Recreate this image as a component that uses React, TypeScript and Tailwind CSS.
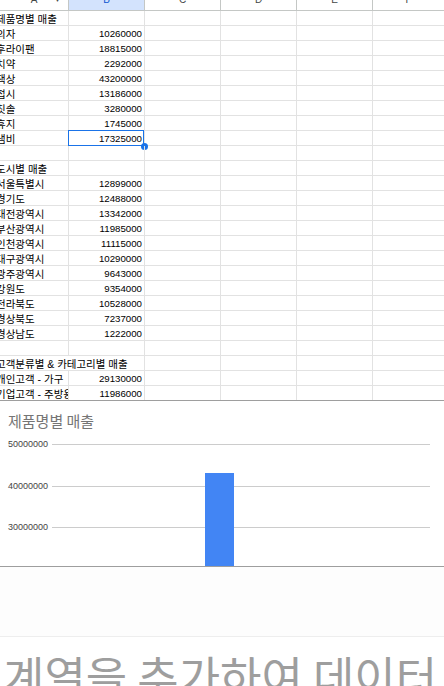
import React from "react";

// 시트 데이터: [A열, B열]
const rows: [string, string][] = [
  ["제품명별 매출", ""],
  ["의자", "10260000"],
  ["후라이팬", "18815000"],
  ["치약", "2292000"],
  ["책상", "43200000"],
  ["접시", "13186000"],
  ["칫솔", "3280000"],
  ["휴지", "1745000"],
  ["냄비", "17325000"],
  ["", ""],
  ["도시별 매출", ""],
  ["서울특별시", "12899000"],
  ["경기도", "12488000"],
  ["대전광역시", "13342000"],
  ["부산광역시", "11985000"],
  ["인천광역시", "11115000"],
  ["대구광역시", "10290000"],
  ["광주광역시", "9643000"],
  ["강원도", "9354000"],
  ["전라북도", "10528000"],
  ["경상북도", "7237000"],
  ["경상남도", "1222000"],
  ["", ""],
  ["고객분류별 & 카테고리별 매출", ""],
  ["개인고객 - 가구", "29130000"],
  ["기업고객 - 주방용품", "11986000"],
];

const SELECTED = 8; // 냄비 행의 B 셀

function HeaderRow() {
  const cols = ["C", "D", "E"];
  return (
    <div className="flex h-[11px] overflow-hidden border-b border-[#c4c7c5] text-[10px] text-[#444746]">
      <div className="relative flex w-[69px] shrink-0 justify-center border-r border-[#c4c7c5]">
        <span className="-mt-[5px] block leading-[10px]">A</span>
        <span className="absolute right-[7px] top-[-4px] block text-[7px] leading-[7px] text-[#444746]">▼</span>
      </div>
      <div className="flex w-[76px] shrink-0 justify-center border-r border-[#c4c7c5] bg-[#d3e3fd] text-[#0b57d0]">
        <span className="-mt-[5px] block leading-[10px]">B</span>
      </div>
      {cols.map((c) => (
        <div key={c} className="flex w-[76px] shrink-0 justify-center border-r border-[#c4c7c5]">
          <span className="-mt-[5px] block leading-[10px]">{c}</span>
        </div>
      ))}
      <div className="flex flex-1 justify-center">
        <span className="-mt-[5px] block leading-[10px]">F</span>
      </div>
    </div>
  );
}

function SheetRow({ a, b, index }: { a: string; b: string; index: number }) {
  const last = index === rows.length - 1;
  // B가 비어 있으면 A의 글자가 옆 칸으로 넘친다 (시트와 같이).
  const spills = b === "" && a.length > 8;
  return (
    <div
      className={`flex text-[9.7px] leading-[16px] text-black ${
        last ? "h-[14px]" : "h-[15px] border-b border-[#e2e2e2]"
      }`}
    >
      <div
        className={`w-[69px] shrink-0 whitespace-nowrap text-[10.5px] ${
          spills ? "relative z-10 overflow-visible" : "overflow-hidden border-r border-[#e2e2e2]"
        }`}
      >
        <span className="ml-[-4px] block">{a}</span>
      </div>
      <div className="relative w-[76px] shrink-0 border-r border-[#e2e2e2] pr-[2px] text-right tabular-nums">
        {b}
        {index === SELECTED && (
          <div className="absolute bottom-[-1px] left-[-1px] right-0 top-[-1px] border border-[#1a73e8]">
            <div className="absolute bottom-[-5px] right-[-5px] h-[7px] w-[7px] rounded-full bg-[#1a73e8]" />
          </div>
        )}
      </div>
      <div className="w-[76px] shrink-0 border-r border-[#e2e2e2]" />
      <div className="w-[76px] shrink-0 border-r border-[#e2e2e2]" />
      <div className="w-[76px] shrink-0 border-r border-[#e2e2e2]" />
      <div className="flex-1" />
    </div>
  );
}

function Chart() {
  const grid = [
    { y: 12, label: "50000000" },
    { y: 54, label: "40000000" },
    { y: 95, label: "30000000" },
  ];
  return (
    <div className="border-t border-[#9e9e9e]">
      <div className="border-b border-[#9e9e9e] bg-white">
        <div className="pb-[4px] pl-[8px] pt-[12px] text-[15px] leading-[15px] text-[#757575] font-['Noto_Sans_CJK_KR',sans-serif]">
          제품명별 매출
        </div>
        <svg width="444" height="134" viewBox="0 0 444 134" className="block">
          {grid.map((g) => (
            <g key={g.label}>
              <line x1="52" x2="430" y1={g.y + 0.5} y2={g.y + 0.5} stroke="#cccccc" strokeWidth="1" />
              <text
                x="8"
                y={g.y + 3}
                fontSize="9"
                fill="#444444"
                fontFamily="'Liberation Sans', sans-serif"
              >
                {g.label}
              </text>
            </g>
          ))}
          <rect x="205" y="41" width="29" height="93" fill="#4285f4" />
        </svg>
      </div>
      <div className="h-[70px] border-b border-[#eeeeee] bg-[#fdfdfd]" />
      <div className="whitespace-nowrap pl-[3px] pt-[16px] text-[45px] leading-none text-[#9e9e9e] font-['Noto_Sans_CJK_KR',sans-serif]">
        계열을 추가하여 데이터
      </div>
    </div>
  );
}

export default function App() {
  return (
    <div className="h-[686px] w-[444px] overflow-hidden bg-white font-['Liberation_Sans','Noto_Sans_CJK_KR',sans-serif]">
      <HeaderRow />
      {rows.map(([a, b], i) => (
        <SheetRow key={i} a={a} b={b} index={i} />
      ))}
      <Chart />
    </div>
  );
}
